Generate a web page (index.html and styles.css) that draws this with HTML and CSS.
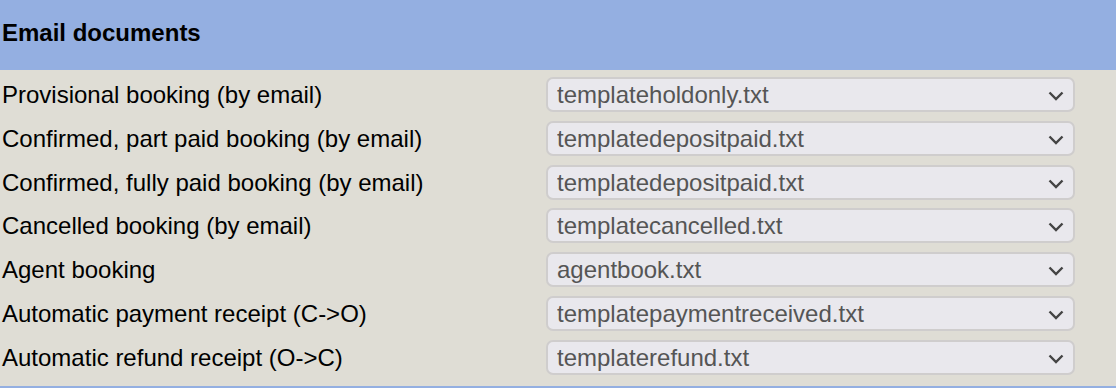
FILE: index.html
```html
<!DOCTYPE html>
<html>
<head>
	<meta charset="UTF-8">
	<title>Email documents</title>
	<link rel="stylesheet" href="styles.css">
</head>
<body>
	<div class="panel">
		<div class="head">Email documents</div>
		<div class="rows">
			<div class="row">
				<span class="label">Provisional booking (by email)</span>
				<div class="pick"><select><option>templateholdonly.txt</option></select><svg viewBox="0 0 16 10"><path d="M1.5 1.5l6.5 6.5 6.5-6.5"/></svg></div>
			</div>
			<div class="row">
				<span class="label">Confirmed, part paid booking (by email)</span>
				<div class="pick"><select><option>templatedepositpaid.txt</option></select><svg viewBox="0 0 16 10"><path d="M1.5 1.5l6.5 6.5 6.5-6.5"/></svg></div>
			</div>
			<div class="row">
				<span class="label">Confirmed, fully paid booking (by email)</span>
				<div class="pick"><select><option>templatedepositpaid.txt</option></select><svg viewBox="0 0 16 10"><path d="M1.5 1.5l6.5 6.5 6.5-6.5"/></svg></div>
			</div>
			<div class="row">
				<span class="label">Cancelled booking (by email)</span>
				<div class="pick"><select><option>templatecancelled.txt</option></select><svg viewBox="0 0 16 10"><path d="M1.5 1.5l6.5 6.5 6.5-6.5"/></svg></div>
			</div>
			<div class="row">
				<span class="label">Agent booking</span>
				<div class="pick"><select><option>agentbook.txt</option></select><svg viewBox="0 0 16 10"><path d="M1.5 1.5l6.5 6.5 6.5-6.5"/></svg></div>
			</div>
			<div class="row">
				<span class="label">Automatic payment receipt (C-&gt;O)</span>
				<div class="pick"><select><option>templatepaymentreceived.txt</option></select><svg viewBox="0 0 16 10"><path d="M1.5 1.5l6.5 6.5 6.5-6.5"/></svg></div>
			</div>
			<div class="row">
				<span class="label">Automatic refund receipt (O-&gt;C)</span>
				<div class="pick"><select><option>templaterefund.txt</option></select><svg viewBox="0 0 16 10"><path d="M1.5 1.5l6.5 6.5 6.5-6.5"/></svg></div>
			</div>
		</div>
	</div>
</body>
</html>
```

FILE: styles.css
```css
*{
	margin: 0;
	padding: 0;
	box-sizing: border-box;
}
body{
	background: #dfddd5;
	font: 24px 'Liberation Sans', Arial, sans-serif;
	color: #000;
}
.panel{
	height: 388px;
	border-bottom: 2px solid #94afe1;
}
.head{
	height: 70px;
	padding-left: 2px;
	line-height: 66px;
	font-weight: bold;
	background: #94afe1;
}
.rows{
	display: flex;
	flex-direction: column;
	gap: 8.8px;
	padding-top: 7px;
}
.row{
	display: grid;
	grid-template-columns: 546px 529px;
	align-items: center;
	height: 35px;
}
.label{
	padding-left: 2px;
	line-height: 35px;
}
.pick{
	position: relative;
	height: 35px;
}
.pick select{
	appearance: none;
	width: 100%;
	height: 35px;
	padding-left: 9px;
	border: 2px solid #cfcdcd;
	border-radius: 7px;
	background: #e9e8ed;
	color: #555;
	font: 24px 'Liberation Sans', Arial, sans-serif;
}
.pick svg{
	position: absolute;
	right: 11px;
	top: 14px;
	width: 16px;
	height: 10px;
	fill: none;
	stroke: #444;
	stroke-width: 2.4;
}
```
